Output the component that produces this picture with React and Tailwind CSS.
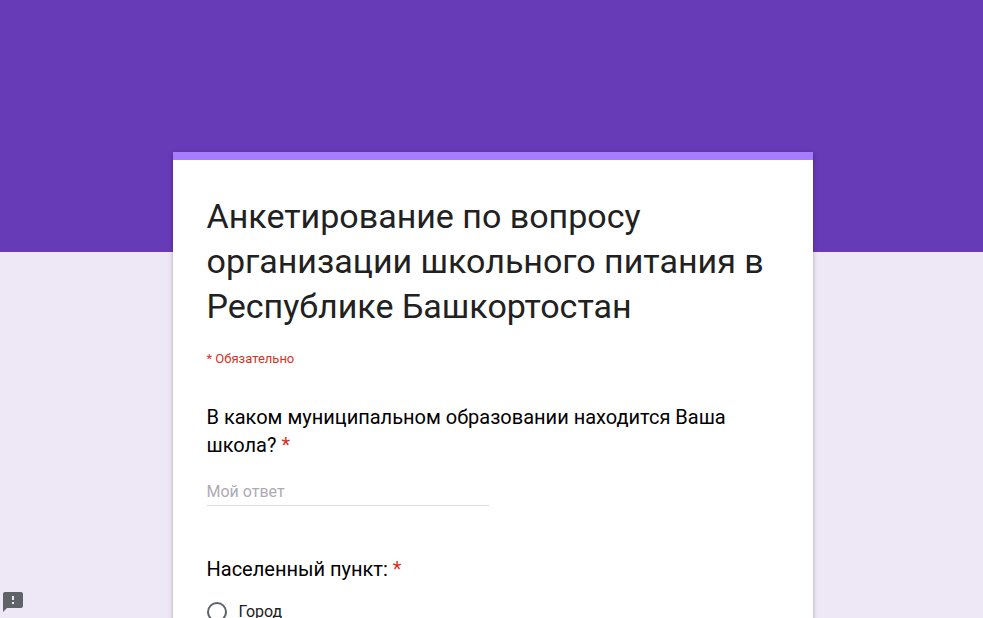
import React from "react";

const FeedbackIcon = () => (
  <svg width="20" height="20" viewBox="0 0 20 20" className="fill-[#5f6368]">
    <path d="M18 0H2C.9 0 0 .9 0 2v18l4-4h14c1.1 0 2-.9 2-2V2c0-1.1-.9-2-2-2zM11 12H9v-2h2zm0-4H9V4h2z" />
  </svg>
);

const RequiredMark = () => <span className="text-[#d93025]"> *</span>;

export default function App() {
  return (
    <div className="relative h-screen overflow-hidden bg-[#ede7f6] font-['Roboto',sans-serif]">
      {/* Purple header band */}
      <div className="h-[252px] bg-[#673ab7]" />

      {/* Form card */}
      <div className="mx-auto -mt-[100px] min-h-[600px] w-[640px] translate-x-[1px] bg-white shadow-[0_2px_2px_0_rgba(0,0,0,0.14),0_3px_1px_-2px_rgba(0,0,0,0.12),0_1px_5px_0_rgba(0,0,0,0.2)]">
        <div className="h-2 bg-[#a97bff]" />

        <div className="px-[34px] pt-[34px]">
          <h1 className="text-[34px] leading-[45px] text-[#212121]">
            Анкетирование по вопросу организации школьного питания в Республике Башкортостан
          </h1>
          <div className="mt-[22px] text-[13px] leading-4 text-[#d93025]">* Обязательно</div>

          <div className="mt-[36px]">
            <div className="text-xl leading-[28px] text-black">
              В каком муниципальном образовании находится Ваша школа?
              <RequiredMark />
            </div>
            <div className="mt-[23px] w-[282px] border-b border-[#dadce0] pb-[3px] text-base leading-5 text-[#b0a9b5]">
              Мой ответ
            </div>
          </div>

          <div className="mt-[49px]">
            <div className="text-xl leading-[28px] text-black">
              Населенный пункт:
              <RequiredMark />
            </div>
            <div className="mt-[17px] flex items-center gap-3">
              <div className="size-5 rounded-full border-2 border-[#5f6368]" />
              <span className="text-base text-[#202124]">Город</span>
            </div>
          </div>
        </div>
      </div>

      {/* Report button */}
      <div className="absolute bottom-[6px] left-[3px]">
        <FeedbackIcon />
      </div>
    </div>
  );
}
